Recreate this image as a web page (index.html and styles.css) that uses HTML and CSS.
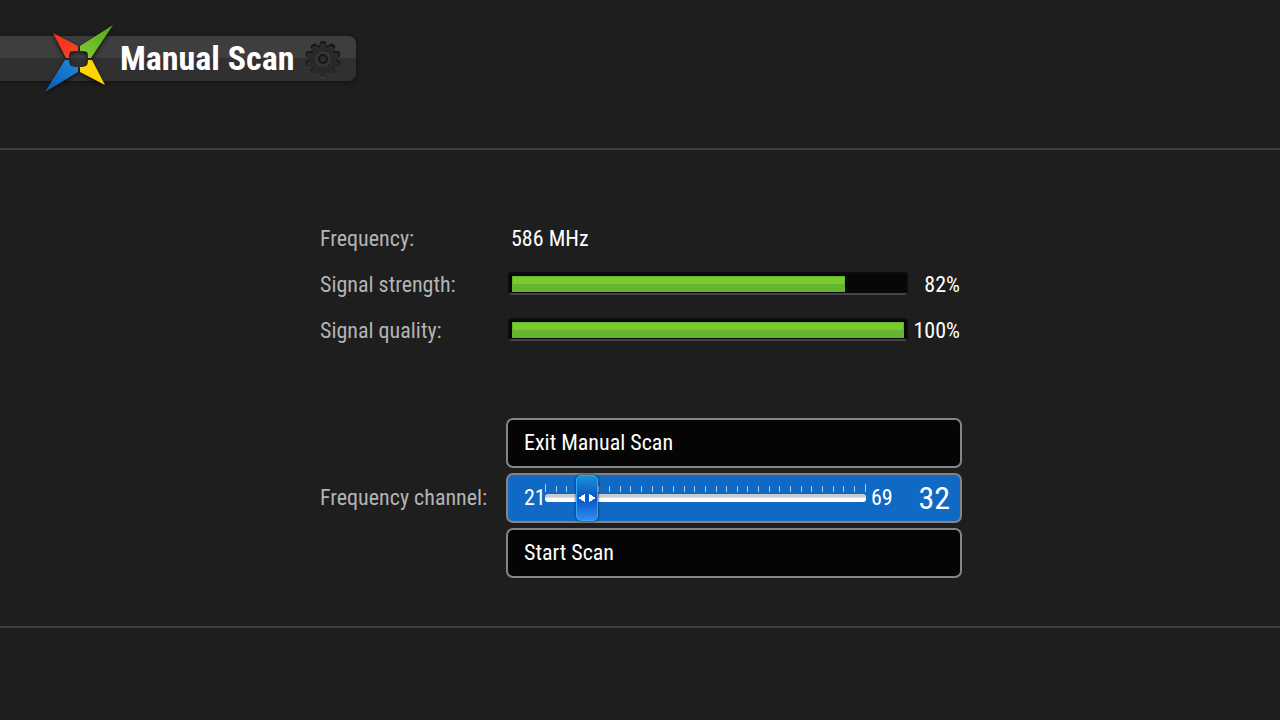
FILE: index.html
```html
<!DOCTYPE html>
<html lang="en">
<head>
    <meta charset="UTF-8">
    <title>Manual Scan</title>
    <link rel="stylesheet" href="styles.css">
</head>
<body>
    <header class="top">
        <div class="tab">
            <svg class="logo" width="72" height="72" viewBox="0 -1 72 72" aria-hidden="true">
                <defs>
                    <linearGradient id="red" x1="0" y1="0" x2="1" y2="1"><stop offset="0" stop-color="#ff2a16"/><stop offset="1" stop-color="#ef4a28"/></linearGradient>
                    <linearGradient id="green" x1="1" y1="0" x2="0" y2="1"><stop offset="0" stop-color="#4fa818"/><stop offset="1" stop-color="#84cb38"/></linearGradient>
                    <linearGradient id="blue" x1="0" y1="1" x2="1" y2="0"><stop offset="0" stop-color="#0758b0"/><stop offset="1" stop-color="#2189dc"/></linearGradient>
                </defs>
                <path fill="url(#red)" d="M9 9 L34 22 V27 Q28 27 26 28 Q25 30 25 34 H22 Z"/>
                <path fill="url(#green)" d="M69 1 L47 34 H44 Q44 29 43 28 Q41 27 36 27 V22 Z"/>
                <path fill="url(#blue)" d="M1 68 L21 36 H25 Q25 40 26 41 Q28 43 34 43 V48 Z"/>
                <path fill="#ffd500" d="M61 61 L36 48 V43 Q41 43 43 41 Q44 40 44 36 H48 Z"/>
            </svg>
            <h1 class="title">Manual Scan</h1>
            <svg class="gear" width="38" height="38" viewBox="-19 -19 38 38" aria-hidden="true">
                <defs>
                    <path id="tooth" d="M-4 -12 L-3 -17 Q-2 -18 0 -18 Q2 -18 3 -17 L4 -12 Z"/>
                    <g id="wheel">
                        <circle r="14"/>
                        <use href="#tooth"/>
                        <use href="#tooth" transform="rotate(36)"/>
                        <use href="#tooth" transform="rotate(72)"/>
                        <use href="#tooth" transform="rotate(108)"/>
                        <use href="#tooth" transform="rotate(144)"/>
                        <use href="#tooth" transform="rotate(180)"/>
                        <use href="#tooth" transform="rotate(216)"/>
                        <use href="#tooth" transform="rotate(252)"/>
                        <use href="#tooth" transform="rotate(288)"/>
                        <use href="#tooth" transform="rotate(324)"/>
                    </g>
                </defs>
                <!-- light edge below, dark edge above, then the face -->
                <use href="#wheel" fill="#444" transform="translate(0 1)"/>
                <use href="#wheel" fill="#141414"/>
                <use href="#wheel" fill="#292929" transform="translate(0 1) scale(.94)"/>
                <circle r="7" fill="#333" stroke="#3f3f3f"/>
                <circle r="4" fill="#2c2c2c" stroke="#171717" stroke-width="2"/>
            </svg>
        </div>
    </header>

    <main class="content">
        <dl class="status">
            <dt>Frequency:</dt>
            <dd>586 MHz</dd>
            <dt>Signal strength:</dt>
            <dd><div class="meter"><div class="fill" style="width: 85%"></div></div><span class="percent">82%</span></dd>
            <dt>Signal quality:</dt>
            <dd><div class="meter"><div class="fill" style="width: 100%"></div></div><span class="percent">100%</span></dd>
        </dl>

        <form class="menu">
            <button class="item" type="button">Exit Manual Scan</button>
            <label class="name" for="channel">Frequency channel:</label>
            <div class="item selected">
                <span class="limit">21</span>
                <div class="slider">
                    <div class="ticks" aria-hidden="true">
                        <i></i><i></i><i></i><i></i><i></i><i></i><i></i><i></i><i></i><i></i>
                        <i></i><i></i><i></i><i></i><i></i><i></i><i></i><i></i><i></i><i></i>
                        <i></i><i></i><i></i><i></i><i></i><i></i><i></i><i></i><i></i><i></i><i></i>
                    </div>
                    <input class="range" id="channel" type="range" min="21" max="69" value="26">
                </div>
                <span class="limit">69</span>
                <output class="value" for="channel">32</output>
            </div>
            <button class="item" type="button">Start Scan</button>
        </form>
    </main>

    <footer class="bottom"></footer>
</body>
</html>
```

FILE: styles.css
```css
* {
    box-sizing: border-box;
}

body {
    display: flex;
    flex-direction: column;
    min-height: 100vh;
    margin: 0;
    background-color: #1e1e1e;
    color: #fff;
    font-family: "Liberation Sans Narrow", "Arial Narrow", "Roboto Condensed", "Open Sans Condensed", "Liberation Sans", sans-serif;
    font-size: 22px;
    line-height: 26px;
}

/* header */
.top {
    display: flex;
    align-items: flex-start;
    height: 150px;
    padding-top: 36px;
    border-bottom: 2px solid #3e3e3e;
}

.tab {
    display: flex;
    align-items: center;
    height: 45px;
    padding: 0 14px 0 44px;
    border-radius: 0 8px 8px 0;
    background: linear-gradient(#3e3e3e 50%, #303030 50%);
    box-shadow: 0 1px 4px #111;
}

.logo {
    flex: none;
    filter: drop-shadow(0 2px 2px #111);
}

.title {
    margin: 0 10px 2px 4px;
    font-size: 34px;
    line-height: 40px;
}

/* middle */
.content {
    flex: 1;
    width: 644px;
    max-width: 100%;
    margin: 0 auto;
    padding: 66px 0 0 2px;
}

.status {
    display: grid;
    grid-template-columns: 188px 1fr;
    grid-auto-rows: 46px;
    align-items: center;
    margin: 0 0 64px;
}

.status dt,
.name {
    color: #b4b4b4;
}

.status dd {
    display: flex;
    align-items: center;
    margin: 0;
    padding-right: 2px;
}

.status dd:first-of-type {
    padding-left: 3px;
}

.meter {
    width: 400px;
    height: 23px;
    margin-bottom: 4px;
    padding: 2px;
    border: 2px solid #0c0c0c;
    border-bottom-color: #444;
    border-radius: 4px;
    background-color: #070707;
}

.fill {
    height: 16px;
    border: 1px solid #62b32d;
    background: linear-gradient(#7aca2b 50%, #65b530 50%);
}

.percent {
    flex: 1;
    text-align: right;
}

.menu {
    display: grid;
    grid-template-columns: 186px 1fr;
    row-gap: 5px;
    align-items: center;
}

.item {
    grid-column: 2;
    display: flex;
    align-items: center;
    height: 50px;
    padding: 0 16px;
    border: 2px solid #858585;
    border-radius: 7px;
    background-color: #050505;
    color: #fff;
    font: inherit;
}

.selected {
    padding: 0 10px 0 16px;
    background-color: #106ac4;
}

.limit {
    width: 21px;
}

/* channel slider */
.slider {
    position: relative;
    width: 321px;
    margin-right: 5px;
}

.ticks {
    position: absolute;
    top: 9px;
    left: 0;
    right: 0;
    display: flex;
    justify-content: space-between;
    align-items: flex-end;
}

.ticks i {
    width: 1px;
    height: 6px;
    background-color: #a9cdf0;
}

.ticks i:first-child,
.ticks i:last-child {
    height: 8px;
}

.range {
    position: relative;
    display: block;
    width: 100%;
    height: 46px;
    margin: 0;
    background: none;
    appearance: none;
}

.range::-webkit-slider-runnable-track {
    height: 8px;
    border-radius: 3px;
    background: linear-gradient(#ccc 40%, #fff 50%);
}

/* the two arrows are conic wedges on top of the blue */
.range::-webkit-slider-thumb {
    width: 22px;
    height: 46px;
    margin-top: -19px;
    border: 1px solid #35a5ed;
    border-radius: 5px;
    background:
        conic-gradient(from 60deg at 0 50%, #fff 60deg, transparent 0) 1px 18px / 7px 8px no-repeat,
        conic-gradient(from 240deg at 100% 50%, #fff 60deg, transparent 0) 12px 18px / 7px 8px no-repeat,
        linear-gradient(#1c90da, #0759c4 48%, #0a5fd0 60%, #348df0);
    box-shadow: 0 0 3px #05264a;
    appearance: none;
}

.value {
    flex: 1;
    font-size: 32px;
    text-align: right;
}

/* footer */
.bottom {
    height: 94px;
    border-top: 2px solid #3e3e3e;
}
```
